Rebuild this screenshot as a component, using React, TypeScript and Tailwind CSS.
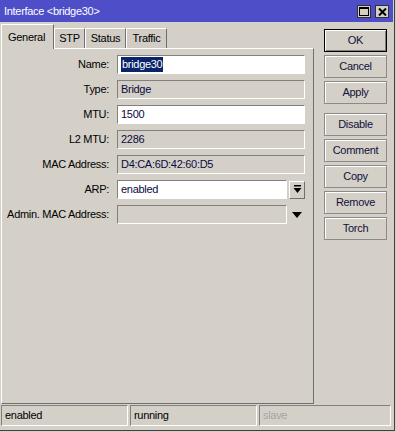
import React from 'react';

const font = { fontFamily: '"Liberation Sans", Arial, sans-serif' };

const sunken = 'border-t border-l border-t-[#808080] border-l-[#808080] border-b border-r border-b-white border-r-white';
const raised = 'border-t border-l border-t-white border-l-white border-b border-r border-b-[#6f6f6f] border-r-[#6f6f6f]';

interface RowProps {
  label: string;
  children: React.ReactNode;
}

const Row: React.FC<RowProps> = ({ label, children }) => (
  <div className="flex items-center h-[19px]">
    <div className="w-[108px] pr-[1px] text-right text-black">{label}</div>
    <div className="ml-[7px] flex items-center">{children}</div>
  </div>
);

const Input: React.FC<{ value?: React.ReactNode; disabled?: boolean; w: string }> = ({ value, disabled, w }) => (
  <div
    className={`${w} h-[19px] ${sunken} flex items-center pl-[3px] text-[#0a0a40] ${disabled ? 'bg-[#d4d0c8]' : 'bg-white'}`}
  >
    {value}
  </div>
);

const Btn: React.FC<{ label: string; def?: boolean; extra?: string }> = ({ label, def, extra }) => (
  <div
    className={`w-[63px] h-[23px] flex items-center justify-center text-[#10103a] bg-[#d4d0c8] ${
      def ? 'border border-black shadow-[inset_1px_1px_0_#fff,inset_-1px_-1px_0_#808080]' : 'border border-[#8a8a8a] shadow-[inset_1px_1px_0_#fff]'
    } ${extra ?? ''}`}
  >
    {label}
  </div>
);

export default function App() {
  return (
    <div className="w-[396px] h-[432px] bg-[#d4d0c8] text-[11px] tracking-[-0.3px]" style={font}>
      <div className="w-[395px] h-[431px] border-r border-b border-[#404040] flex flex-col">
        {/* title bar */}
        <div className="h-[22px] mr-[1px] bg-[#4e4ec8] flex items-center justify-between pl-[4px] pr-[4px]">
          <span className="text-white">Interface &lt;bridge30&gt;</span>
          <div className="flex gap-[4px] mt-[1px]">
            <div className="w-[14px] h-[13px] bg-[#d4d0c8] border border-[#303030] flex items-center justify-center">
              <svg width="10" height="9" viewBox="0 0 10 9">
                <rect x="0.5" y="0.5" width="9" height="8" fill="none" stroke="#000" />
                <rect x="0" y="0" width="10" height="2" fill="#000" />
              </svg>
            </div>
            <div className="w-[14px] h-[13px] bg-[#d4d0c8] border border-[#303030] flex items-center justify-center">
              <svg width="9" height="8" viewBox="0 0 9 8">
                <path d="M1 0.5 L8 7.5 M8 0.5 L1 7.5" stroke="#000" strokeWidth="2" />
              </svg>
            </div>
          </div>
        </div>

        <div className="flex flex-1">
          {/* left: tabs + panel */}
          <div className="flex flex-col w-[315px]">
            <div className="flex items-end h-[26px] pl-[1px] relative z-10">
              <div className={`h-[25px] w-[53px] pl-[6px] pt-[4px] bg-[#d4d0c8] border-t border-l border-t-white border-l-white border-r border-r-[#6f6f6f] -mb-[1px]`}>
                General
              </div>
              <div className={`h-[20px] w-[31px] ${raised} border-b-0 bg-[#d1cdc5] flex items-center justify-center`}>STP</div>
              <div className={`h-[20px] w-[41px] ${raised} border-b-0 bg-[#d1cdc5] flex items-center justify-center`}>Status</div>
              <div className={`h-[20px] w-[41px] ${raised} border-b-0 bg-[#d1cdc5] flex items-center justify-center`}>Traffic</div>
            </div>
            <div className={`flex-1 ml-[1px] w-[313px] ${raised} border-b-[#6f6f6f] pt-[6px] flex flex-col gap-[6px]`}>
              <Row label="Name:">
                <Input
                  w="w-[188px]"
                  value={<span className="bg-[#0a246a] text-white h-[15px] flex items-center pl-[1px] pr-[1px]">bridge30</span>}
                />
              </Row>
              <Row label="Type:">
                <Input w="w-[188px]" disabled value="Bridge" />
              </Row>
              <Row label="MTU:">
                <Input w="w-[188px]" value="1500" />
              </Row>
              <Row label="L2 MTU:">
                <Input w="w-[188px]" disabled value="2286" />
              </Row>
              <Row label="MAC Address:">
                <Input w="w-[188px]" disabled value="D4:CA:6D:42:60:D5" />
              </Row>
              <Row label="ARP:">
                <Input w="w-[170px]" value="enabled" />
                <div className={`ml-[2px] w-[16px] h-[18px] ${raised} border-[#8a8a8a] flex items-center justify-center`}>
                  <svg width="9" height="9" viewBox="0 0 9 9">
                    <rect x="1" y="0" width="7" height="1.5" fill="#000" />
                    <path d="M0.5 3 H8.5 L4.5 8 Z" fill="#000" />
                  </svg>
                </div>
              </Row>
              <Row label="Admin. MAC Address:">
                <Input w="w-[170px]" disabled />
                <div className="ml-[2px] w-[16px] h-[18px] flex items-center justify-center">
                  <svg width="10" height="6" viewBox="0 0 10 6">
                    <path d="M0 0 H10 L5 6 Z" fill="#000" />
                  </svg>
                </div>
              </Row>
            </div>
          </div>

          {/* right: buttons */}
          <div className="ml-[9px] pt-[7px] flex flex-col gap-[3px]">
            <Btn label="OK" def />
            <Btn label="Cancel" />
            <Btn label="Apply" />
            <Btn label="Disable" extra="mt-[6px]" />
            <Btn label="Comment" />
            <Btn label="Copy" />
            <Btn label="Remove" />
            <Btn label="Torch" />
          </div>
        </div>

        {/* status bar */}
        <div className="h-[26px] pt-[1px] pl-[1px] flex gap-[2px]">
          <div className={`w-[127px] h-[21px] ${sunken} pl-[3px] flex items-center text-black`}>enabled</div>
          <div className={`w-[127px] h-[21px] ${sunken} pl-[3px] flex items-center text-black`}>running</div>
          <div className={`w-[132px] h-[21px] ${sunken} pl-[3px] flex items-center text-[#a8a4a0]`}>slave</div>
        </div>
      </div>
    </div>
  );
}
